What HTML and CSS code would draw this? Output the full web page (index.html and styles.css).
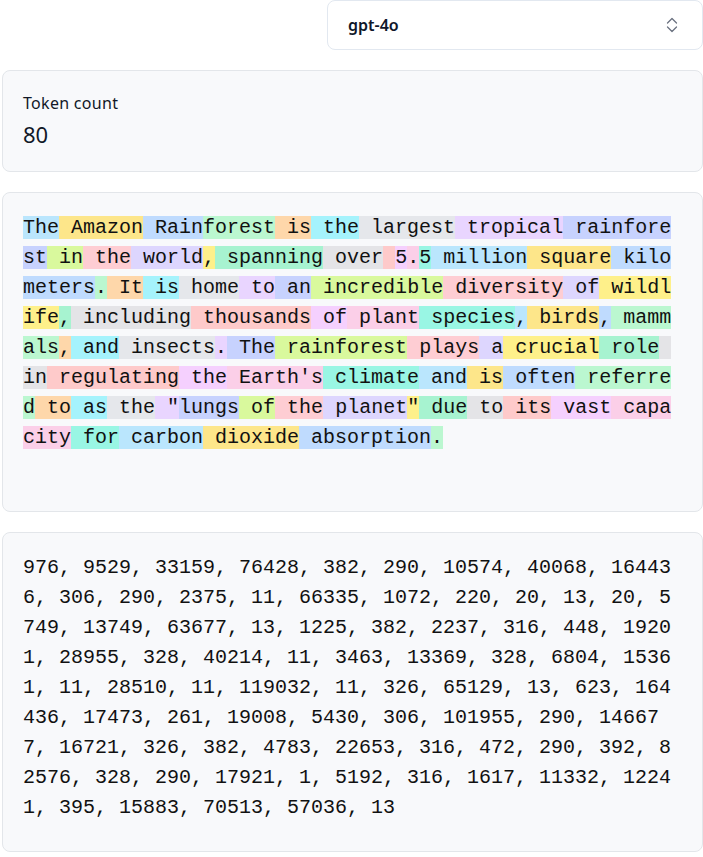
FILE: index.html
```
<!DOCTYPE html>
<html lang="en">
<head>
<meta charset="utf-8">
<title>Tokenizer</title>
<link rel="stylesheet" href="styles.css">
</head>
<body>
<main class="page">
  <div class="toolbar">
    <button class="select" type="button">
      <span class="select-value">gpt-4o</span>
      <svg class="select-icon" width="12" height="16" viewBox="0 0 12 16" fill="none" stroke="currentColor" stroke-width="1.3" stroke-linecap="round" stroke-linejoin="round"><path d="M1.5 6 L6 1.5 L10.5 6"/><path d="M1.5 10 L6 14.5 L10.5 10"/></svg>
    </button>
  </div>

  <section class="card stat">
    <div class="stat-label">Token count</div>
    <div class="stat-value">80</div>
  </section>

  <section class="card mono-card">
    <p class="tokens"><span class="c0">The</span><span class="c1"> Amazon</span><span class="c2"> Rain</span><span class="c3">forest</span><span class="c4"> is</span><span class="c5"> the</span><span class="c6"> largest</span><span class="c7"> tropical</span><span class="c8"> rainforest</span><span class="c9"> in</span><span class="c10"> the</span><span class="c11"> world</span><span class="c12">,</span><span class="c13"> spanning</span><span class="c14"> over</span><span class="c15"> </span><span class="c16">5</span><span class="c17">.</span><span class="c18">5</span><span class="c0"> million</span><span class="c1"> square</span><span class="c2"> kilometers</span><span class="c3">.</span><span class="c4"> It</span><span class="c5"> is</span><span class="c6"> home</span><span class="c7"> to</span><span class="c8"> an</span><span class="c9"> incredible</span><span class="c10"> diversity</span><span class="c11"> of</span><span class="c12"> wildlife</span><span class="c13">,</span><span class="c14"> including</span><span class="c15"> thousands</span><span class="c16"> of</span><span class="c17"> plant</span><span class="c18"> species</span><span class="c0">,</span><span class="c1"> birds</span><span class="c2">,</span><span class="c3"> mammals</span><span class="c4">,</span><span class="c5"> and</span><span class="c6"> insects</span><span class="c7">.</span><span class="c8"> The</span><span class="c9"> rainforest</span><span class="c10"> plays</span><span class="c11"> a</span><span class="c12"> crucial</span><span class="c13"> role</span><span class="c14"> in</span><span class="c15"> regulating</span><span class="c16"> the</span><span class="c17"> Earth's</span><span class="c18"> climate</span><span class="c0"> and</span><span class="c1"> is</span><span class="c2"> often</span><span class="c3"> referred</span><span class="c4"> to</span><span class="c5"> as</span><span class="c6"> the</span><span class="c7"> "</span><span class="c8">lungs</span><span class="c9"> of</span><span class="c10"> the</span><span class="c11"> planet</span><span class="c12">"</span><span class="c13"> due</span><span class="c14"> to</span><span class="c15"> its</span><span class="c16"> vast</span><span class="c17"> capacity</span><span class="c18"> for</span><span class="c0"> carbon</span><span class="c1"> dioxide</span><span class="c2"> absorption</span><span class="c3">.</span></p>
  </section>

  <section class="card mono-card">
    <p class="ids">976, 9529, 33159, 76428, 382, 290, 10574, 40068, 164436, 306, 290, 2375, 11, 66335, 1072, 220, 20, 13, 20, 5749, 13749, 63677, 13, 1225, 382, 2237, 316, 448, 19201, 28955, 328, 40214, 11, 3463, 13369, 328, 6804, 15361, 11, 28510, 11, 119032, 11, 326, 65129, 13, 623, 164436, 17473, 261, 19008, 5430, 306, 101955, 290, 146677, 16721, 326, 382, 4783, 22653, 316, 472, 290, 392, 82576, 328, 290, 17921, 1, 5192, 316, 1617, 11332, 12241, 395, 15883, 70513, 57036, 13</p>
  </section>
</main>
</body>
</html>
```
FILE: styles.css
```
* { box-sizing: border-box; }

html, body {
  margin: 0;
  background: #ffffff;
}

body {
  font-family: "Noto Sans", "Open Sans", sans-serif;
  color: #111827;
}

.page {
  padding: 0 0 0 2px;
  display: flex;
  flex-direction: column;
  gap: 20px;
}

.toolbar {
  display: flex;
  justify-content: flex-end;
}

.select {
  width: 376px;
  height: 50px;
  display: flex;
  align-items: center;
  justify-content: space-between;
  padding: 0 24px 0 20px;
  background: #ffffff;
  border: 1px solid #e2e8f0;
  border-radius: 8px;
  font-family: inherit;
  cursor: pointer;
}

.select-value {
  font-size: 16px;
  font-weight: 600;
  color: #0f172a;
}

.select-icon {
  color: #6b7280;
}

.card {
  width: 701px;
  background: #f8f9fb;
  border: 1px solid #e3e6ea;
  border-radius: 8px;
  padding: 20px;
}

.stat {
  padding: 20px 20px 22px;
}

.stat-label {
  font-size: 16px;
  letter-spacing: 0.3px;
  line-height: 24px;
  color: #111827;
}

.stat-value {
  margin-top: 4px;
  font-size: 22px;
  line-height: 30px;
  color: #111827;
}

.mono-card {
  min-height: 320px;
}

.tokens,
.ids {
  margin: 0;
  font-family: "Liberation Mono", "DejaVu Sans Mono", monospace;
  font-size: 20px;
  line-height: 30px;
  white-space: pre-wrap;
  word-break: break-all;
  color: #111111;
}

.c0 { background: #bae6fd; }
.c1 { background: #fde68a; }
.c2 { background: #bfdbfe; }
.c3 { background: #bbf7d0; }
.c4 { background: #fed7aa; }
.c5 { background: #a5f3fc; }
.c6 { background: #e5e7eb; }
.c7 { background: #e9d5ff; }
.c8 { background: #c7d2fe; }
.c9 { background: #d9f99d; }
.c10 { background: #fecdd3; }
.c11 { background: #ddd6fe; }
.c12 { background: #fef08a; }
.c13 { background: #a7f3d0; }
.c14 { background: #e4e4e7; }
.c15 { background: #fecaca; }
.c16 { background: #f5d0fe; }
.c17 { background: #fbcfe8; }
.c18 { background: #99f6e4; }
```
